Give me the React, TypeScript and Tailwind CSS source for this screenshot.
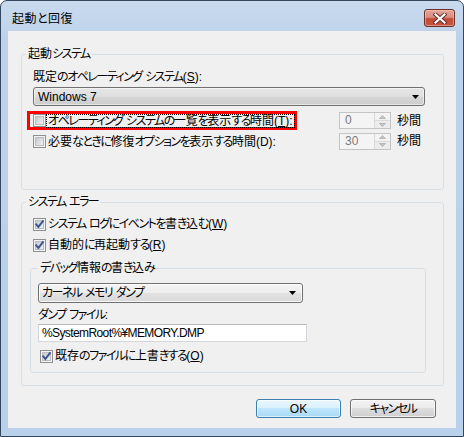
import React from "react";

function T({ children }: { children: string }) {
  const parts = children.split(/([\u3040-\u30ff]+)/);
  return (
    <>
      {parts.map((p, i) =>
        /[\u3040-\u30ff]/.test(p) ? (
          <span key={i} className="tracking-[-1.5px]">
            {p}
          </span>
        ) : (
          <React.Fragment key={i}>{p}</React.Fragment>
        )
      )}
    </>
  );
}

function U({ children }: { children: string }) {
  return <span className="underline underline-offset-[1px]">{children}</span>;
}

function CheckBox({ checked }: { checked?: boolean }) {
  return (
    <svg width="13" height="13" viewBox="0 0 13 13" className="shrink-0 block">
      <defs>
        <linearGradient id="cbInner" x1="0" y1="0" x2="1" y2="1">
          <stop offset="0" stopColor="#c3c7cc" />
          <stop offset="1" stopColor="#f3f3f3" />
        </linearGradient>
      </defs>
      <rect x="0.5" y="0.5" width="12" height="12" fill="#f5f5f5" stroke="#8e8f8f" />
      <rect x="2.5" y="2.5" width="8" height="8" fill="url(#cbInner)" stroke="#b9bcc0" />
      {checked && (
        <path d="M3.2 6.4 L5.4 8.9 L9.9 3.2" fill="none" stroke="#3e5592" strokeWidth="1.9" strokeLinecap="square" />
      )}
    </svg>
  );
}

function Spin({ value }: { value: string }) {
  return (
    <div className="flex h-[17px] w-[52px] border border-[#c4c4c4] bg-[#f4f4f4]">
      <div className="flex-1 pl-[5px] text-[#7a7a7a] leading-[15px]">{value}</div>
      <div className="flex w-[16px] flex-col border-l border-[#d9d9d9]">
        <div className="flex flex-1 items-center justify-center border-b border-[#dadada] bg-[#f3f3f3]">
          <svg width="7" height="4" viewBox="0 0 7 4">
            <path d="M0.5 3.5 L3.5 0.5 L6.5 3.5 Z" fill="#c8c8c8" stroke="#9c9c9c" strokeWidth="0.6" />
          </svg>
        </div>
        <div className="flex flex-1 items-center justify-center bg-[#ececec]">
          <svg width="7" height="4" viewBox="0 0 7 4">
            <path d="M0.5 0.5 L3.5 3.5 L6.5 0.5 Z" fill="#c8c8c8" stroke="#9c9c9c" strokeWidth="0.6" />
          </svg>
        </div>
      </div>
    </div>
  );
}

function Arrow() {
  return (
    <svg width="7" height="4" viewBox="0 0 7 4" className="block">
      <path d="M0 0 H7 L3.5 4 Z" fill="#000" />
    </svg>
  );
}

export default function App() {
  return (
    <div className="h-[437px] w-[464px] whitespace-nowrap bg-white [font-family:'Liberation_Sans','Noto_Sans_CJK_JP',sans-serif] [font-feature-settings:'palt'] text-[12px] leading-[14px] text-black">
      <div className="h-[437px] w-[464px] rounded-t-[7px] border border-[#34475c] bg-[linear-gradient(to_bottom,#c9daee_0%,#bcd2ea_40px,#b9d1ea_100%)]">
        {/* title bar */}
        <div className="flex h-[30px] items-start justify-between pl-[11px] pr-[8px]">
          <div className="mt-[11px] tracking-[0.5px]">起動と回復</div>
          <div className="mt-[8px] flex h-[18px] w-[31px] items-center justify-center rounded-[3px] border border-[#6b2f28] bg-[linear-gradient(to_bottom,#e4a596_0%,#d98e80_45%,#c24a39_55%,#c9563f_100%)] shadow-[inset_0_0_0_1px_rgba(255,220,210,0.45)]">
            <svg width="14" height="11" viewBox="0 0 14 11">
              <path d="M2.5 1.5 L11.5 9.5 M11.5 1.5 L2.5 9.5" stroke="#5a2a24" strokeWidth="4" strokeLinecap="square" />
              <path d="M2.5 1.5 L11.5 9.5 M11.5 1.5 L2.5 9.5" stroke="#ffffff" strokeWidth="2.2" strokeLinecap="square" />
            </svg>
          </div>
        </div>
        {/* client */}
        <div className="ml-[7px] flex h-[397px] w-[448px] flex-col bg-[#f0f0f0] pl-[13px] pr-[12px]">
          {/* 起動システム */}
          <fieldset className="mt-[16px] h-[143px] w-[423px] rounded-[3px] border border-[#d5dfe5]">
            <legend className="ml-[4px] px-[2px] leading-[14px]">
              <T>起動システム</T>
            </legend>
            <div className="flex flex-col pl-[11px]">
              <div className="mt-[9px] leading-[14px]">
                <T>既定のオペレーティング システム(</T>
                <U>S</U>):
              </div>
              <div className="mt-[3px] flex h-[19px] w-[392px] items-center justify-between rounded-[3px] border border-[#707070] bg-[linear-gradient(to_bottom,#e6e6e6_0%,#dfdfdf_50%,#d6d6d6_50%,#cdcdcd_100%)] pl-[4px] pr-[5px] shadow-[inset_0_0_0_1px_rgba(255,255,255,0.5)]">
                <span>Windows 7</span>
                <Arrow />
              </div>
              <div className="mt-[5px] flex h-[19px] items-center">
                <div className="w-[306px]">
                  <div className="ml-[-6px] flex h-[19px] w-[270px] items-center border-[3px] border-[#ff0000] pl-[3px]">
                    <CheckBox />
                    <span className="border border-dotted border-black px-[1px] leading-[12px]">
                      <T>オペレーティング システムの一覧を表示する時間(</T>
                      <U>T</U>):
                    </span>
                  </div>
                </div>
                <Spin value="0" />
                <span className="ml-[6px]">秒間</span>
              </div>
              <div className="mt-[2px] flex h-[18px] items-center">
                <div className="flex w-[306px] items-center">
                  <CheckBox />
                  <span className="ml-[2px] pt-[2px]">
                    <T>必要なときに修復オプションを表示する時間(D):</T>
                  </span>
                </div>
                <Spin value="30" />
                <span className="ml-[6px]">秒間</span>
              </div>
            </div>
          </fieldset>

          {/* システム エラー */}
          <fieldset className="mt-[5px] h-[191px] w-[423px] rounded-[3px] border border-[#d5dfe5]">
            <legend className="ml-[4px] px-[2px] leading-[14px]">
              <T>システム エラー</T>
            </legend>
            <div className="flex flex-col pl-[11px]">
              <div className="mt-[8px] flex h-[14px] items-center">
                <CheckBox checked />
                <span className="ml-[2px]">
                  <T>システム ログにイベントを書き込む(</T>
                  <U>W</U>)
                </span>
              </div>
              <div className="mt-[7px] flex h-[14px] items-center">
                <CheckBox checked />
                <span className="ml-[2px]">
                  <T>自動的に再起動する(</T>
                  <U>R</U>)
                </span>
              </div>
              <fieldset className="ml-[-3px] mt-[9px] h-[112px] w-[396px] rounded-[3px] border border-[#d5dfe5]">
                <legend className="ml-[7px] px-[2px] leading-[14px]">
                  <T>デバッグ情報の書き込み</T>
                </legend>
                <div className="flex flex-col pl-[7px]">
                  <div className="mt-[8px] flex h-[20px] w-[265px] items-center justify-between rounded-[3px] border border-[#707070] bg-[linear-gradient(to_bottom,#f4f4f4_0%,#ededed_50%,#e2e2e2_50%,#d9d9d9_100%)] pl-[3px] pr-[6px] shadow-[inset_0_0_0_1px_rgba(255,255,255,0.8)]">
                    <span>
                      <T>カーネル メモリ ダンプ</T>
                    </span>
                    <Arrow />
                  </div>
                  <div className="mt-[5px] leading-[14px]">
                    <T>ダンプ ファイル:</T>
                  </div>
                  <div className="mt-[2px] flex h-[18px] w-[269px] items-center border border-[#d3d7dc] border-t-[#b5b9be] bg-white pl-[3px] tracking-[-0.6px]">
                    %SystemRoot%¥MEMORY.DMP
                  </div>
                  <div className="ml-[2px] mt-[7px] flex h-[14px] items-center">
                    <CheckBox checked />
                    <span className="ml-[2px]">
                      <T>既存のファイルに上書きする(</T>
                      <U>O</U>)
                    </span>
                  </div>
                </div>
              </fieldset>
            </div>
          </fieldset>

          {/* buttons */}
          <div className="mt-[13px] flex justify-end gap-[9px] pr-[8px]">
            <button className="flex h-[19px] w-[85px] items-center justify-center rounded-[3px] border border-[#3c7fb1] bg-[linear-gradient(to_bottom,#eaf6fd_0%,#d9f0fc_50%,#bee6fd_50%,#a7d9f5_100%)] shadow-[inset_0_0_0_1px_rgba(255,255,255,0.6)]">
              OK
            </button>
            <button className="flex h-[19px] w-[86px] items-center justify-center rounded-[3px] border border-[#707070] bg-[linear-gradient(to_bottom,#f2f2f2_0%,#ebebeb_50%,#dddddd_50%,#cfcfcf_100%)] shadow-[inset_0_0_0_1px_rgba(255,255,255,0.7)]">
              <T>キャンセル</T>
            </button>
          </div>
        </div>
      </div>
    </div>
  );
}
